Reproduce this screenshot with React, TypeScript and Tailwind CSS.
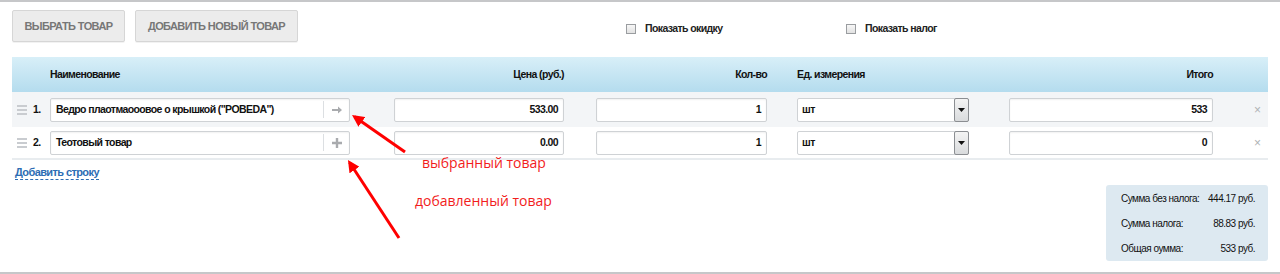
import React from 'react';

const base = "font-['Liberation_Sans',Arial,sans-serif]";
const cond = 'text-[10.5px] font-bold tracking-[-0.6px] whitespace-nowrap';

type Row = {
  n: number;
  name: string;
  icon: 'arrow' | 'plus';
  price: string;
  qty: string;
  unit: string;
  total: string;
};

const rows: Row[] = [
  { n: 1, name: 'Ведро плаотмаооовое о крышкой ("POBEDA")', icon: 'arrow', price: '533.00', qty: '1', unit: 'шт', total: '533' },
  { n: 2, name: 'Теотовый товар', icon: 'plus', price: '0.00', qty: '1', unit: 'шт', total: '0' },
];

function Handle() {
  return (
    <div className="flex flex-col gap-[2px] w-[10px]">
      <span className="h-[2px] bg-[#c9ccd0]" />
      <span className="h-[2px] bg-[#c9ccd0]" />
      <span className="h-[2px] bg-[#c9ccd0]" />
    </div>
  );
}

function Field({ value, className = '' }: { value: string; className?: string }) {
  return (
    <div
      className={`h-[24px] flex items-center justify-end bg-white border border-[#cfd2d5] rounded-[2px] shadow-[inset_0_1px_2px_rgba(0,0,0,0.06)] px-[5px] text-[#111] ${cond} ${className}`}
    >
      {value}
    </div>
  );
}

function NameField({ value, icon }: { value: string; icon: 'arrow' | 'plus' }) {
  return (
    <div className={`w-[300px] h-[24px] flex items-center bg-white border border-[#cfd2d5] rounded-[2px] shadow-[inset_0_1px_2px_rgba(0,0,0,0.06)] text-[#111] ${cond}`}>
      <span className="flex-1 pl-[5px] overflow-hidden">{value}</span>
      <span className="w-px h-[17px] bg-[#dcdfe2]" />
      <span className="w-[25px] flex items-center justify-center">
        {icon === 'arrow' ? (
          <svg width="10" height="8" viewBox="0 0 10 8">
            <path d="M0 3h6V0.5L10 4 6 7.5V5H0z" fill="#a9abae" />
          </svg>
        ) : (
          <svg width="10" height="10" viewBox="0 0 10 10">
            <path d="M3.8 0h2.4v3.8H10v2.4H6.2V10H3.8V6.2H0V3.8h3.8z" fill="#a9abae" />
          </svg>
        )}
      </span>
    </div>
  );
}

function SelectField({ value }: { value: string }) {
  return (
    <div className={`w-[172px] h-[24px] flex items-center bg-white border border-[#cfd2d5] rounded-[2px] text-[#111] ${cond}`}>
      <span className="flex-1 pl-[4px]">{value}</span>
      <span className="w-[15px] h-[24px] -mr-px -my-px flex items-center justify-center border border-[#8b8e92] rounded-[2px] bg-gradient-to-b from-[#f4f4f4] to-[#d9dbdd]">
        <svg width="7" height="4" viewBox="0 0 7 4">
          <path d="M0 0h7L3.5 4z" fill="#111" />
        </svg>
      </span>
    </div>
  );
}

function Checkbox({ label, className = '' }: { label: string; className?: string }) {
  return (
    <label className={`flex items-center gap-[9px] ${className}`}>
      <span className="w-[10px] h-[10px] border border-[#9a9da0] bg-gradient-to-b from-[#f7f7f7] to-[#e2e2e2]" />
      <span className={`text-[#222] ${cond}`}>{label}</span>
    </label>
  );
}

export default function App() {
  return (
    <div className={`relative w-[1280px] h-[274px] bg-white border-t-2 border-b-2 border-[#c6c7c9] overflow-hidden ${base}`}>
      {/* toolbar */}
      <div className="flex items-center pl-[12px] pt-[8px]">
        <button className="h-[32px] w-[113px] bg-[#ececec] border border-[#d6d6d6] rounded-[2px] shadow-[0_1px_0_rgba(0,0,0,0.05)] text-[11px] font-bold uppercase tracking-[-0.6px] whitespace-nowrap text-[#777]">
          Выбрать товар
        </button>
        <button className="ml-[10px] h-[32px] w-[163px] bg-[#ececec] border border-[#d6d6d6] rounded-[2px] shadow-[0_1px_0_rgba(0,0,0,0.05)] text-[11px] font-bold uppercase tracking-[-0.6px] whitespace-nowrap text-[#777]">
          Добавить новый товар
        </button>
        <Checkbox label="Показать окидку" className="ml-[328px] mt-[6px] w-[220px]" />
        <Checkbox label="Показать налог" className="mt-[6px]" />
      </div>

      {/* table */}
      <div className="ml-[12px] mr-[12px] mt-[15px]">
        <div className={`h-[35px] flex items-center bg-gradient-to-b from-[#d8eff8] to-[#b4dcee] text-[#111] ${cond}`}>
          <div className="w-[38px]" />
          <div className="w-[300px]">Наименование</div>
          <div className="ml-[44px] w-[170px] text-right">Цена (руб.)</div>
          <div className="ml-[32px] w-[171px] text-right">Кол-во</div>
          <div className="ml-[30px] w-[172px]">Ед. измерения</div>
          <div className="ml-[40px] w-[204px] text-right">Итого</div>
        </div>
        {rows.map((r, i) => (
          <div
            key={r.n}
            className={`flex items-center ${i === 0 ? 'h-[35px] bg-[#f3f5f7]' : 'h-[33px] bg-white border-b-2 border-[#e8ecef]'}`}
          >
            <div className="w-[38px] flex items-center pl-[5px] gap-[6px]">
              <Handle />
              <span className={`text-[#111] ${cond}`}>{r.n}.</span>
            </div>
            <NameField value={r.name} icon={r.icon} />
            <Field value={r.price} className="ml-[44px] w-[170px]" />
            <Field value={r.qty} className="ml-[32px] w-[171px]" />
            <div className="ml-[30px]">
              <SelectField value={r.unit} />
            </div>
            <Field value={r.total} className="ml-[40px] w-[204px]" />
            <div className="flex-1 text-right pr-[7px] text-[12px] text-[#b0b2b5]">×</div>
          </div>
        ))}
      </div>

      {/* footer */}
      <div className="flex items-start justify-between pl-[15px] pr-[12px] pt-[6px]">
        <span className="text-[#2d6db4] border-b border-dashed border-[#2d6db4] leading-[13px] text-[11px] font-bold tracking-[-0.6px] whitespace-nowrap">
          Добавить строку
        </span>
        <div className="mt-[19px] w-[162px] h-[76px] bg-[#dde9f1] rounded-[3px] pl-[15px] pr-[13px] pt-[8px] pb-[6px] flex flex-col justify-between text-[10px] tracking-[-0.5px] whitespace-nowrap text-[#111] leading-[12px]">
          <div className="flex justify-between gap-[6px]">
            <span>Сумма без налога:</span>
            <span>444.17 руб.</span>
          </div>
          <div className="flex justify-between">
            <span>Сумма налога:</span>
            <span>88.83 руб.</span>
          </div>
          <div className="flex justify-between">
            <span>Общая оумма:</span>
            <span>533 руб.</span>
          </div>
        </div>
      </div>

      {/* annotations */}
      <svg className="absolute inset-0 pointer-events-none" width="1280" height="274">
        <defs>
          <marker id="head" markerWidth="4" markerHeight="4" refX="3" refY="2" orient="auto" markerUnits="strokeWidth">
            <path d="M0 0L4 2L0 4z" fill="#f00" />
          </marker>
        </defs>
        <line x1="405" y1="150" x2="354.5" y2="114.7" stroke="#f00" strokeWidth="3" markerEnd="url(#head)" />
        <line x1="399" y1="236" x2="349.6" y2="160.5" stroke="#f00" strokeWidth="3" markerEnd="url(#head)" />
      </svg>
      <span className="absolute left-[422px] top-[150px] text-[14px] text-[#f21d1d] font-['Open_Sans',sans-serif]">
        выбранный товар
      </span>
      <span className="absolute left-[415px] top-[188px] text-[14px] text-[#f21d1d] font-['Open_Sans',sans-serif]">
        добавленный товар
      </span>
    </div>
  );
}
